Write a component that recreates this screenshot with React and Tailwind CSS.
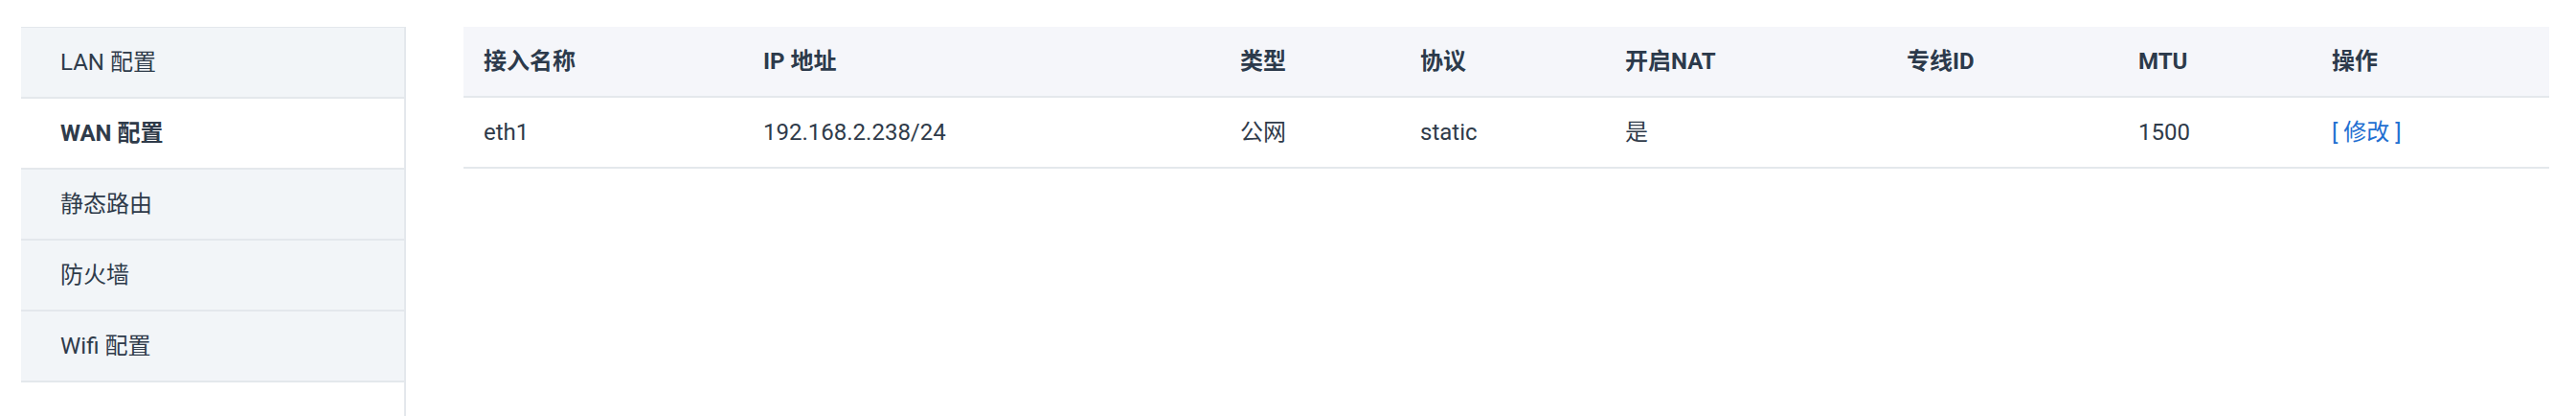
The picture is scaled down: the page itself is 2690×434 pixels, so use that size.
const menu = ["LAN 配置", "WAN 配置", "静态路由", "防火墙", "Wifi 配置"];

const columns = ["接入名称", "IP 地址", "类型", "协议", "开启NAT", "专线ID", "MTU", "操作"];

const rows = [
  { name: "eth1", ip: "192.168.2.238/24", type: "公网", proto: "static", nat: "是", line: "", mtu: "1500" }
];

export default function App() {
  const active = 1;

  return (
    <div
      className="flex h-[434px] bg-white pt-[28px] pl-[22px] pr-[28px] text-[24px] text-[#2f3b4a]"
      style={{ fontFamily: 'Roboto, "Noto Sans CJK SC", sans-serif' }}
    >
      <div className="w-[402px] shrink-0 border-r-2 border-[#e4e8ec]">
        <ul className="border-t border-[#e4e8ec]">
          {menu.map((item, i) => (
            <li
              key={item}
              className={
                "flex h-[74px] items-center border-b-2 border-[#e4e8ec] pl-[41px] " +
                (i === active ? "bg-white font-bold" : "bg-[#f2f5f8]")
              }
            >
              {item}
            </li>
          ))}
        </ul>
      </div>

      <div className="ml-[60px] flex-1">
        <div className="grid grid-cols-[292px_498px_188px_214px_294px_242px_202px_1fr] h-[74px] items-center border-b-2 border-[#e4e8ec] bg-[#f5f6fa] font-bold text-[#2c3a4b]">
          {columns.map((c) => (
            <div key={c} className="pl-[21px]">
              {c}
            </div>
          ))}
        </div>
        {rows.map((r) => (
          <div
            key={r.name}
            className="grid grid-cols-[292px_498px_188px_214px_294px_242px_202px_1fr] h-[74px] items-center border-b-2 border-[#e4e8ec]"
          >
            <div className="pl-[21px]">{r.name}</div>
            <div className="pl-[21px]">{r.ip}</div>
            <div className="pl-[21px]">{r.type}</div>
            <div className="pl-[21px]">{r.proto}</div>
            <div className="pl-[21px]">{r.nat}</div>
            <div className="pl-[21px]">{r.line}</div>
            <div className="pl-[21px]">{r.mtu}</div>
            <div className="pl-[21px]">
              <a href="#" className="text-[#1f6fd1]">
                [ 修改 ]
              </a>
            </div>
          </div>
        ))}
      </div>
    </div>
  );
}
